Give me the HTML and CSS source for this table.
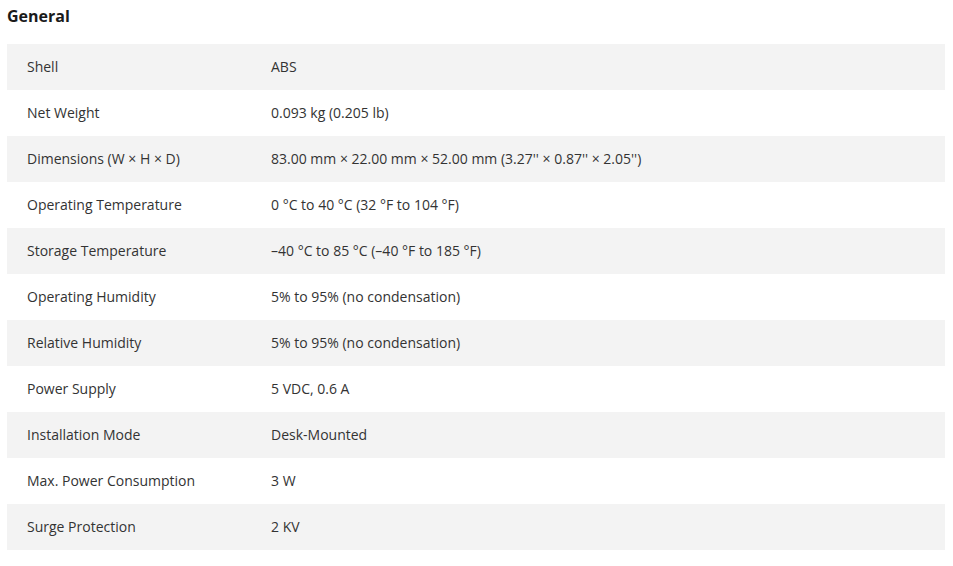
FILE: index.html
```html
<!DOCTYPE html>
<html>
<head>
<meta charset="utf-8">
<link rel="stylesheet" href="styles.css">
</head>
<body>
<div class="page">
  <h3 class="title">General</h3>
  <div class="specs">
    <div class="row"><div class="label">Shell</div><div class="value">ABS</div></div>
    <div class="row"><div class="label">Net Weight</div><div class="value">0.093 kg (0.205 lb)</div></div>
    <div class="row"><div class="label">Dimensions (W × H × D)</div><div class="value">83.00 mm × 22.00 mm × 52.00 mm (3.27'' × 0.87'' × 2.05'')</div></div>
    <div class="row"><div class="label">Operating Temperature</div><div class="value">0 °C to 40 °C (32 °F to 104 °F)</div></div>
    <div class="row"><div class="label">Storage Temperature</div><div class="value">–40 °C to 85 °C (–40 °F to 185 °F)</div></div>
    <div class="row"><div class="label">Operating Humidity</div><div class="value">5% to 95% (no condensation)</div></div>
    <div class="row"><div class="label">Relative Humidity</div><div class="value">5% to 95% (no condensation)</div></div>
    <div class="row"><div class="label">Power Supply</div><div class="value">5 VDC, 0.6 A</div></div>
    <div class="row"><div class="label">Installation Mode</div><div class="value">Desk-Mounted</div></div>
    <div class="row"><div class="label">Max. Power Consumption</div><div class="value">3 W</div></div>
    <div class="row"><div class="label">Surge Protection</div><div class="value">2 KV</div></div>
  </div>
</div>
</body>
</html>
```
FILE: styles.css
```css
html, body {
  margin: 0;
  padding: 0;
  background: #ffffff;
}
body {
  font-family: "Open Sans", "Liberation Sans", sans-serif;
  color: #333333;
}
.page {
  padding: 5px 8px 0 7px;
}
.title {
  margin: 0 0 17px 0;
  font-size: 16px;
  line-height: 22px;
  font-weight: 700;
  color: #1a1a1a;
}
.specs {
  display: flex;
  flex-direction: column;
}
.row {
  display: grid;
  grid-template-columns: 264px 1fr;
  height: 46px;
  align-items: center;
  font-size: 14px;
  line-height: 20px;
}
.row:nth-child(odd) {
  background: #f3f3f3;
}
.label {
  padding-left: 20px;
}
```
